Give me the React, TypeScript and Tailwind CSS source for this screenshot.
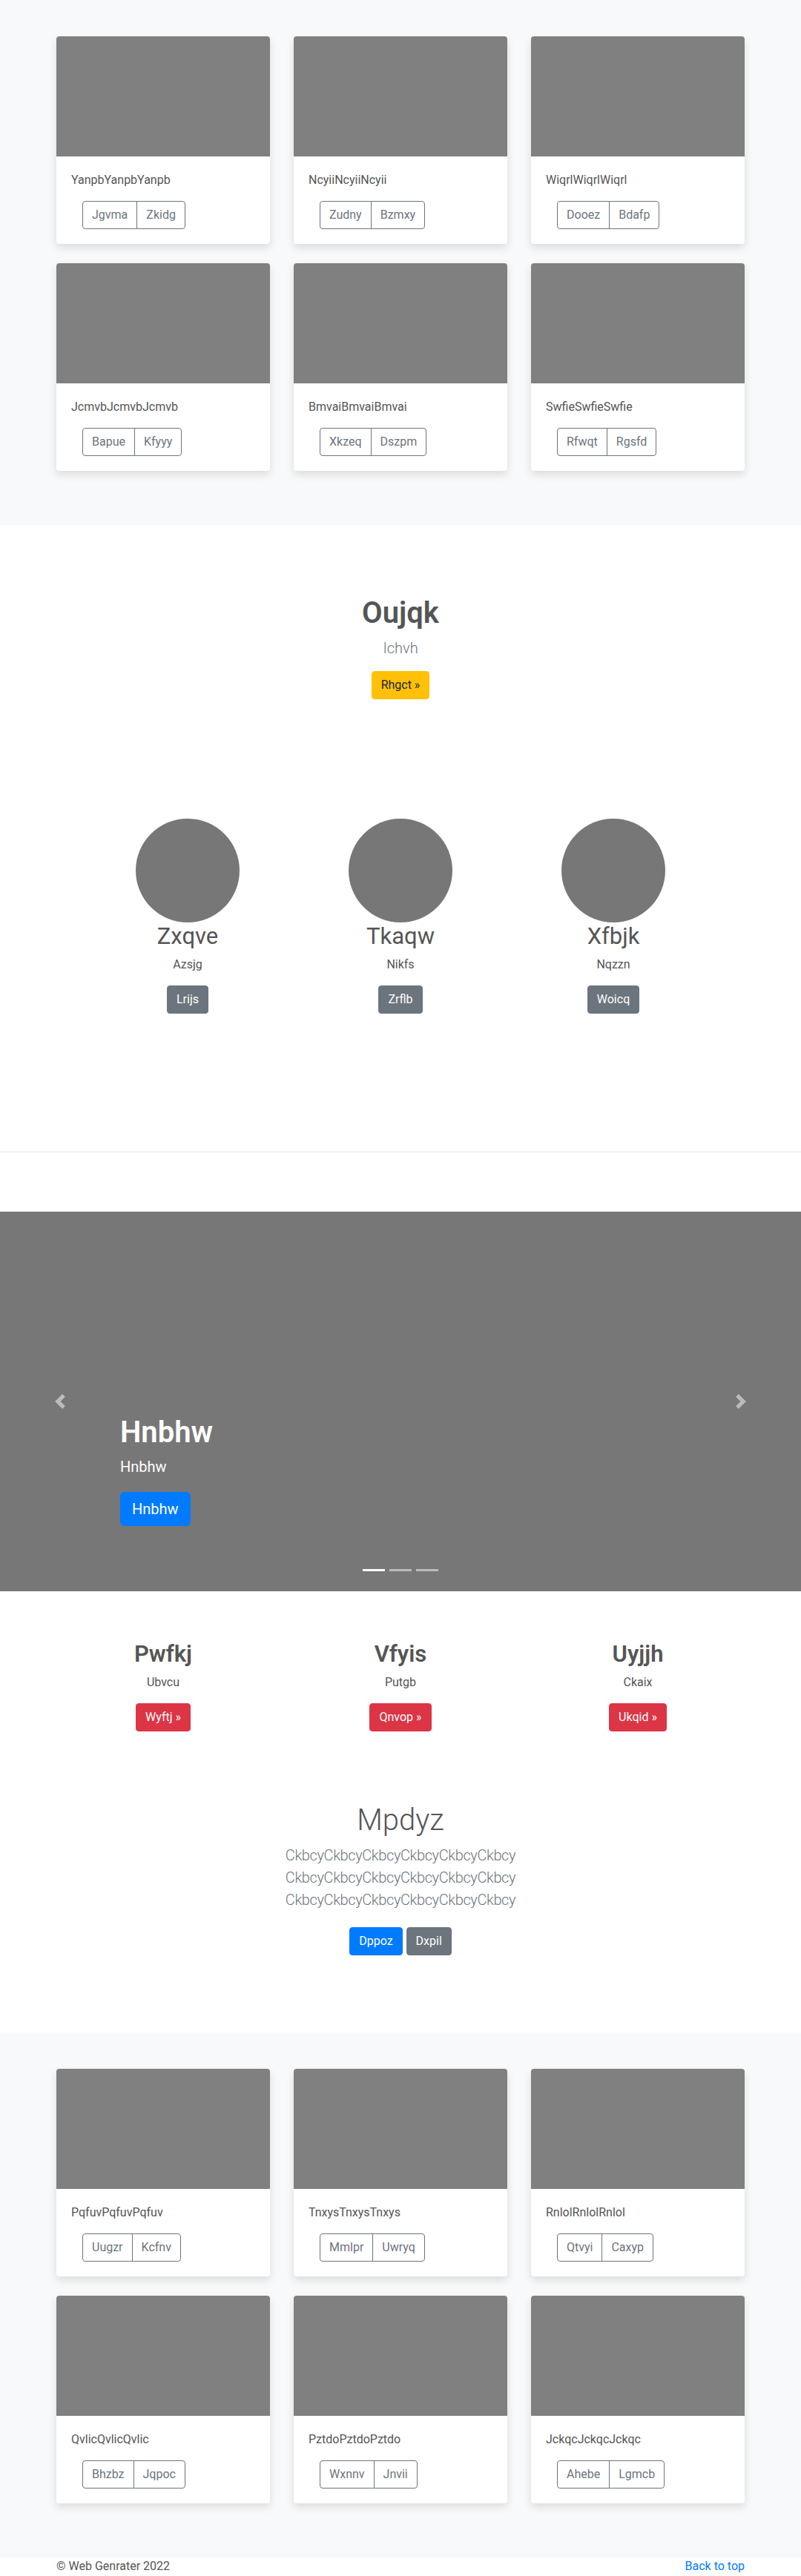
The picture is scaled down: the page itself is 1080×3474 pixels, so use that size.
import React from 'react';

type Card = { title: string; a: string; b: string };

const albumTop: Card[] = [
  { title: 'YanpbYanpbYanpb', a: 'Jgvma', b: 'Zkidg' },
  { title: 'NcyiiNcyiiNcyii', a: 'Zudny', b: 'Bzmxy' },
  { title: 'WiqrlWiqrlWiqrl', a: 'Dooez', b: 'Bdafp' },
  { title: 'JcmvbJcmvbJcmvb', a: 'Bapue', b: 'Kfyyy' },
  { title: 'BmvaiBmvaiBmvai', a: 'Xkzeq', b: 'Dszpm' },
  { title: 'SwfieSwfieSwfie', a: 'Rfwqt', b: 'Rgsfd' },
];

const albumBottom: Card[] = [
  { title: 'PqfuvPqfuvPqfuv', a: 'Uugzr', b: 'Kcfnv' },
  { title: 'TnxysTnxysTnxys', a: 'Mmlpr', b: 'Uwryq' },
  { title: 'RnlolRnlolRnlol', a: 'Qtvyi', b: 'Caxyp' },
  { title: 'QvlicQvlicQvlic', a: 'Bhzbz', b: 'Jqpoc' },
  { title: 'PztdoPztdoPztdo', a: 'Wxnnv', b: 'Jnvii' },
  { title: 'JckqcJckqcJckqc', a: 'Ahebe', b: 'Lgmcb' },
];

const people = [
  { name: 'Zxqve', text: 'Azsjg', btn: 'Lrijs' },
  { name: 'Tkaqw', text: 'Nikfs', btn: 'Zrflb' },
  { name: 'Xfbjk', text: 'Nqzzn', btn: 'Woicq' },
];

const features = [
  { name: 'Pwfkj', text: 'Ubvcu', btn: 'Wyftj' },
  { name: 'Vfyis', text: 'Putgb', btn: 'Qnvop' },
  { name: 'Uyjjh', text: 'Ckaix', btn: 'Ukqid' },
];

function Album({ cards }: { cards: Card[] }) {
  return (
    <section className="bg-[#f8f9fa] pt-[49px] pb-[73px]">
      <div className="mx-auto grid w-[960px] grid-cols-3 gap-x-8 gap-y-[26px] px-4">
        {cards.map((c) => (
          <div
            key={c.title}
            className="overflow-hidden rounded bg-white shadow-[0_5px_12px_rgba(0,0,0,0.12)]"
          >
            <div className="h-[162px] bg-[#808080]" />
            <div className="p-5">
              <p className="mb-4 leading-6">{c.title}</p>
              <div className="ml-[15px] inline-flex">
                <button className="rounded-l border border-[#6c757d] px-3 py-[6px] leading-6 text-[#6c757d]">
                  {c.a}
                </button>
                <button className="-ml-px rounded-r border border-[#6c757d] px-3 py-[6px] leading-6 text-[#6c757d]">
                  {c.b}
                </button>
              </div>
            </div>
          </div>
        ))}
      </div>
    </section>
  );
}

function Chevron({ dir }: { dir: 'prev' | 'next' }) {
  return (
    <svg viewBox="0 0 8 8" className="size-5" fill="#fff" fillOpacity={0.5}>
      {dir === 'prev' ? (
        <path d="M5.25 0l-4 4 4 4 1.5-1.5-2.5-2.5 2.5-2.5-1.5-1.5z" />
      ) : (
        <path d="M2.75 0l-1.5 1.5 2.5 2.5-2.5 2.5 1.5 1.5 4-4-4-4z" />
      )}
    </svg>
  );
}

export default function App() {
  return (
    <div className="w-full bg-white text-base leading-6 text-[#555] font-[Roboto,'Liberation_Sans',sans-serif]">
      <Album cards={albumTop} />

      {/* hero */}
      <section className="pt-[95px] text-center">
        <h1 className="mb-2 text-[40px] leading-[48px] font-semibold">Oujqk</h1>
        <p className="mb-4 text-[20px] leading-[30px] font-light text-[#6c757d]">Ichvh</p>
        <button className="rounded border border-[#ffc107] bg-[#ffc107] px-3 py-[6px] leading-6 text-[#212529]">
          Rhgct »
        </button>
      </section>

      {/* circles */}
      <section className="pt-[161px] pb-[186px]">
        <div className="mx-auto grid w-[861px] grid-cols-3 text-center">
          {people.map((p) => (
            <div key={p.name} className="flex flex-col items-center">
              <div className="size-[140px] rounded-full bg-[#777]" />
              <h2 className="mb-2 text-[31px] leading-[37px] font-normal">{p.name}</h2>
              <p className="mb-4">{p.text}</p>
              <button className="rounded border border-[#6c757d] bg-[#6c757d] px-3 py-[6px] leading-6 text-white">
                {p.btn}
              </button>
            </div>
          ))}
        </div>
      </section>

      <hr className="border-0 border-t border-[#e3e3e3]" />

      {/* carousel */}
      <section className="relative mt-20 h-[512px] bg-[#777]">
        <div className="absolute inset-y-0 left-0 flex w-[15%] items-center justify-center">
          <Chevron dir="prev" />
        </div>
        <div className="absolute inset-y-0 right-0 flex w-[15%] items-center justify-center">
          <Chevron dir="next" />
        </div>
        <div className="absolute right-[15%] bottom-12 left-[15%] py-5 text-left text-white">
          <h1 className="mb-2 text-[40px] leading-[48px] font-semibold">Hnbhw</h1>
          <p className="mb-5 text-[20px] leading-[28px]">Hnbhw</p>
          <p className="mb-5 flex">
            <button className="rounded-md bg-[#007bff] px-4 py-2 text-[20px] leading-[30px] text-white">
              Hnbhw
            </button>
          </p>
        </div>
        <div className="absolute bottom-[27px] left-0 flex w-full justify-center gap-[6px]">
          <span className="h-[3px] w-[30px] bg-white" />
          <span className="h-[3px] w-[30px] bg-white/50" />
          <span className="h-[3px] w-[30px] bg-white/50" />
        </div>
      </section>

      {/* features */}
      <section className="pt-[66px]">
        <div className="mx-auto grid w-[960px] grid-cols-3 gap-x-8 px-4 text-center">
          {features.map((f) => (
            <div key={f.name} className="flex flex-col items-center">
              <h2 className="mb-2 text-[31px] leading-[37px] font-semibold">{f.name}</h2>
              <p className="mb-4">{f.text}</p>
              <button className="rounded border border-[#dc3545] bg-[#dc3545] px-3 py-[6px] leading-6 text-white">
                {f.btn} »
              </button>
            </div>
          ))}
        </div>
      </section>

      {/* jumbotron */}
      <section className="pt-[96px] pb-[104px] text-center">
        <h1 className="mb-2 text-[40px] leading-[48px] font-light">Mpdyz</h1>
        <div className="mx-auto w-[456px] text-[20px] leading-[30px] font-light tracking-[-0.4px] text-[#6c757d]">
          <p>CkbcyCkbcyCkbcyCkbcyCkbcyCkbcy CkbcyCkbcyCkbcyCkbcyCkbcyCkbcy CkbcyCkbcyCkbcyCkbcyCkbcyCkbcy</p>
        </div>
        <div className="mt-[22px] flex justify-center gap-[5px]">
          <button className="rounded border border-[#007bff] bg-[#007bff] px-3 py-[6px] leading-6 text-white">
            Dppoz
          </button>
          <button className="rounded border border-[#6c757d] bg-[#6c757d] px-3 py-[6px] leading-6 text-white">
            Dxpil
          </button>
        </div>
      </section>

      <Album cards={albumBottom} />

      <footer className="mx-auto flex h-6 w-[960px] justify-between px-4 leading-6">
        <p>© Web Genrater 2022</p>
        <p>
          <a href="#" className="text-[#007bff]">
            Back to top
          </a>
        </p>
      </footer>
    </div>
  );
}
